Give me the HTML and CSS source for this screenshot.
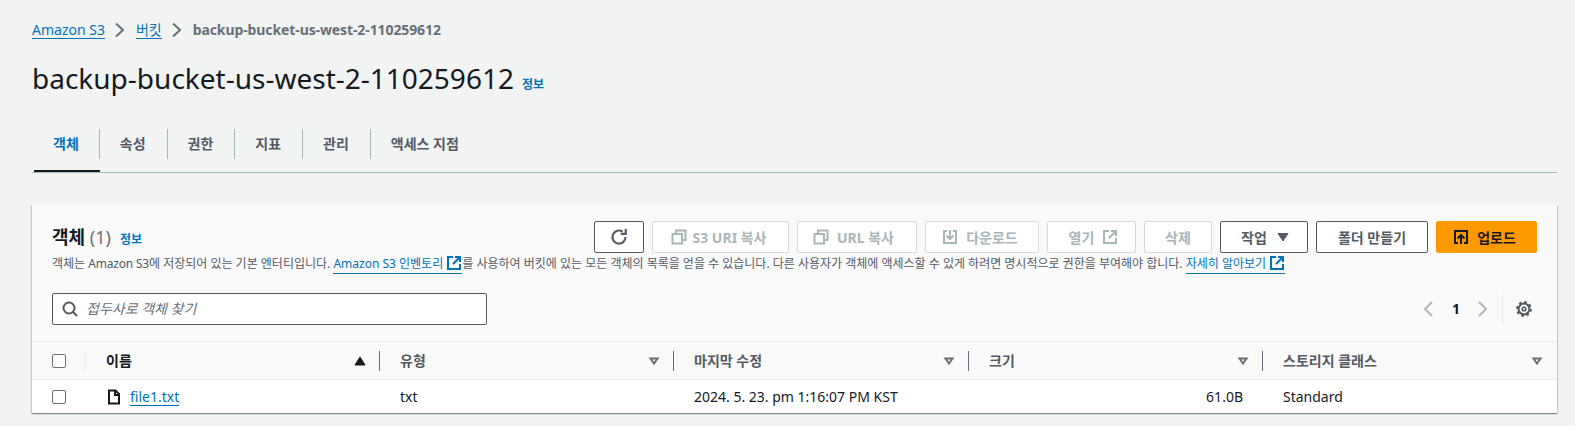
FILE: index.html
```html
<!DOCTYPE html>
<html lang="ko">
<head>
  <meta charset="UTF-8">
  <title>backup-bucket-us-west-2-110259612</title>
  <link rel="stylesheet" href="styles.css">
</head>
<body>
  <svg class="defs" width="0" height="0">
    <defs>
      <symbol id="i-ext" viewBox="0 0 16 16"><path d="M14 9v5H2V2h5M9 2h5v5M14 2 7 9" fill="none" stroke="currentColor" stroke-width="2"/></symbol>
      <symbol id="i-copy" viewBox="0 0 16 16"><path d="M5 5V1.500h9.500V11H11M1.500 5H11v9.500H1.500z" fill="none" stroke="currentColor" stroke-width="2"/></symbol>
      <symbol id="i-caret" viewBox="0 0 16 16"><path d="M3 4.500h10L8 12z" fill="currentColor" stroke="currentColor" stroke-width="1"/></symbol>
      <symbol id="i-sort" viewBox="0 0 16 16"><path d="M4.500 5.500h7L8 10.500z" fill="none" stroke="currentColor" stroke-width="2"/></symbol>
    </defs>
  </svg>

  <nav class="crumbs">
    <a href="#">Amazon S3</a>
    <svg class="crumb-sep" width="16" height="16" viewBox="0 0 16 16"><path d="M4 1.500l7 6.500-7 6.500" fill="none" stroke="currentColor" stroke-width="2"/></svg>
    <a href="#">버킷</a>
    <svg class="crumb-sep" width="16" height="16" viewBox="0 0 16 16"><path d="M4 1.500l7 6.500-7 6.500" fill="none" stroke="currentColor" stroke-width="2"/></svg>
    <span class="crumb-current">backup-bucket-us-west-2-110259612</span>
  </nav>

  <div class="page-title">
    <h1>backup-bucket-us-west-2-110259612</h1>
    <a class="info" href="#">정보</a>
  </div>

  <div class="tabs">
    <a class="tab active" href="#">객체</a>
    <a class="tab" href="#">속성</a>
    <a class="tab" href="#">권한</a>
    <a class="tab" href="#">지표</a>
    <a class="tab" href="#">관리</a>
    <a class="tab last" href="#">액세스 지점</a>
  </div>

  <section class="panel">
    <div class="panel-head">
      <div class="panel-top">
        <div class="panel-title">
          <h2>객체 <span class="count">(1)</span></h2>
          <a class="info" href="#">정보</a>
        </div>
        <div class="actions">
          <button class="btn refresh">
            <svg width="18" height="18" viewBox="0 0 16 16"><path d="M13.800 8A5.800 5.800 0 1 1 11.300 3.300" fill="none" stroke="currentColor" stroke-width="1.900"/><path d="M9.500 5.200h4.500V.8" fill="none" stroke="currentColor" stroke-width="1.900"/></svg>
          </button>
          <button class="btn off s3"><svg width="16" height="16"><use href="#i-copy"/></svg>S3 URI 복사</button>
          <button class="btn off url"><svg width="16" height="16"><use href="#i-copy"/></svg>URL 복사</button>
          <button class="btn off down">
            <svg width="16" height="16" viewBox="0 0 16 16"><path d="M5 2H2v12h12V2h-3M8 1v9M4.500 6.500 8 10l3.500-3.500" fill="none" stroke="currentColor" stroke-width="2"/></svg>
            다운로드
          </button>
          <button class="btn off open">열기<svg width="16" height="16"><use href="#i-ext"/></svg></button>
          <button class="btn off del">삭제</button>
          <button class="btn work">작업<svg width="16" height="16"><use href="#i-caret"/></svg></button>
          <button class="btn folder">폴더 만들기</button>
          <button class="btn primary">
            <svg width="16" height="16" viewBox="0 0 16 16"><path d="M5 14H2V2h12v12h-3M8 15V6M4.500 9.500 8 6l3.500 3.500" fill="none" stroke="currentColor" stroke-width="2"/></svg>
            업로드
          </button>
        </div>
      </div>
      <p class="desc">객체는 <span class="tight">Amazon S3</span>에 저장되어 있는 기본 엔터티입니다. <a href="#">Amazon S3 인벤토리 <svg class="ext-link" width="16" height="16"><use href="#i-ext"/></svg></a>를 사용하여 버킷에 있는 모든 객체의 목록을 얻을 수 있습니다. 다른 사용자가 객체에 액세스할 수 있게 하려면 명시적으로 권한을 부여해야 합니다. <a href="#">자세히 알아보기 <svg class="ext-link" width="16" height="16"><use href="#i-ext"/></svg></a></p>
    </div>

    <div class="tools">
      <label class="search">
        <svg width="16" height="16" viewBox="0 0 16 16"><circle cx="7" cy="7" r="5.500" fill="none" stroke="currentColor" stroke-width="2"/><path d="M11 11l4 4" stroke="currentColor" stroke-width="2"/></svg>
        <span>접두사로 객체 찾기</span>
      </label>
      <div class="pager">
        <svg class="pg-arrow" width="16" height="16" viewBox="0 0 16 16"><path d="M12 1 5 8l7 7" fill="none" stroke="currentColor" stroke-width="2"/></svg>
        <b>1</b>
        <svg class="pg-arrow" width="16" height="16" viewBox="0 0 16 16"><path d="M4 1l7 7-7 7" fill="none" stroke="currentColor" stroke-width="2"/></svg>
        <span class="pg-div"></span>
        <svg class="gear" width="16" height="16" viewBox="0 0 16 16"><circle cx="8" cy="8" r="5.400" fill="none" stroke="currentColor" stroke-width="2"/><circle cx="8" cy="8" r="6.800" fill="none" stroke="currentColor" stroke-width="2.200" stroke-dasharray="2.670 2.670"/><circle cx="8" cy="8" r="1.800" fill="none" stroke="currentColor" stroke-width="1.600"/></svg>
      </div>
    </div>

    <div class="grid head">
      <div class="cell check"><span class="box"></span></div>
      <div class="cell th sorted">이름<svg width="16" height="16" viewBox="0 0 16 16"><path d="M3 12h10L8 4z" fill="currentColor" stroke="currentColor"/></svg></div>
      <div class="cell th">유형<svg width="16" height="16"><use href="#i-sort"/></svg></div>
      <div class="cell th">마지막 수정<svg width="16" height="16"><use href="#i-sort"/></svg></div>
      <div class="cell th">크기<svg width="16" height="16"><use href="#i-sort"/></svg></div>
      <div class="cell th end">스토리지 클래스<svg width="16" height="16"><use href="#i-sort"/></svg></div>
    </div>
    <div class="grid row">
      <div class="cell check"><span class="box"></span></div>
      <div class="cell name">
        <svg width="16" height="16" viewBox="0 0 16 16"><path d="M9.500 1.500H3v13h10V5zM9 1.500V6h4.500" fill="none" stroke="currentColor" stroke-width="2"/></svg>
        <a href="#">file1.txt</a>
      </div>
      <div class="cell">txt</div>
      <div class="cell">2024. 5. 23. pm 1:16:07 PM KST</div>
      <div class="cell size">61.0B</div>
      <div class="cell">Standard</div>
    </div>
  </section>
</body>
</html>
```

FILE: styles.css
```css
* { box-sizing: border-box; }
html, body { margin: 0; }
body {
  background: #f2f3f3;
  color: #16191f;
  font-family: "Noto Sans", "Noto Sans CJK KR", sans-serif;
  font-size: 14px;
  line-height: 20px;
  padding: 20px 18px 0 32px;
  height: 426px;
  overflow: hidden;
}
a { color: #0073bb; text-decoration: none; }
svg { display: block; flex: none; }
.defs { position: absolute; }

/* breadcrumbs */
.crumbs { display: flex; align-items: center; height: 20px; }
.crumbs a { border-bottom: 1px solid #0073bb; line-height: 17px; }
.crumb-sep { color: #687078; margin: 0 8px 0 7px; }
.crumb-current { color: #687078; font-weight: 700; letter-spacing: -.1px; }

.page-title { display: flex; align-items: baseline; margin-top: 17px; height: 42px; }
.page-title h1 { margin: 0; font-size: 28px; line-height: 42px; font-weight: 400; }
.info { font-size: 12px; font-weight: 700; margin-left: 8px; }

/* tabs */
.tabs { display: flex; margin-top: 30px; height: 44px; border-bottom: 1px solid #aab7b8; }
.tab {
  position: relative;
  color: #545b64;
  font-weight: 700;
  height: 30px;
  line-height: 30px;
  padding: 0 21px 0 20px;
  border-right: 1px solid #aab7b8;
}
.tab.active { color: #0073bb; margin-left: 2px; padding: 0 20px 0 19px; }
.tab.active::after {
  content: "";
  position: absolute;
  left: 0;
  right: -1px;
  top: 41px;
  height: 2px;
  background: #16191f;
}
.tab.last { border-right: 0; }

/* panel */
.panel {
  margin-top: 32px;
  background: #fff;
  box-shadow: 0 1px 1px 0 rgba(0, 28, 36, .3), 1px 1px 1px 0 rgba(0, 28, 36, .15), -1px 1px 1px 0 rgba(0, 28, 36, .15);
}
.panel-head { background: #fafafa; padding: 16px 20px 0 20px; }
.panel-top { display: flex; justify-content: space-between; align-items: flex-start; }
.panel-title { display: flex; align-items: baseline; margin-top: 4px; }
.panel-title h2 { margin: 0; font-size: 18px; line-height: 24px; font-weight: 700; }
.panel-title .info { margin-left: 9px; }
.count { color: #687078; font-weight: 400; }

.actions { display: flex; gap: 8px; }
.btn {
  display: flex;
  align-items: center;
  justify-content: center;
  gap: 8px;
  height: 32px;
  background: #fff;
  border: 1px solid #545b64;
  border-radius: 2px;
  color: #545b64;
  font: 700 14px "Noto Sans", "Noto Sans CJK KR", sans-serif;
  padding: 0;
}
.btn.off { border-color: #d5dbdb; color: #aab7b8; }
.refresh { width: 50px; }
.s3 { width: 137px; gap: 6px; padding-right: 4px; }
.url { width: 120px; padding-right: 7px; }
.down { width: 114px; padding-right: 4px; }
.open { width: 89px; padding-left: 4px; }
.del { width: 68px; }
.work { width: 88px; padding-left: 4px; }
.folder { width: 112px; }
.primary { width: 101px; padding-right: 4px; background: #f90; border-color: #f90; color: #16191f; }

.desc { margin: 1px 0 0; font-size: 12px; line-height: 20px; color: #545b64; white-space: nowrap; }
.desc a { border-bottom: 1px solid #0073bb; padding-bottom: 1px; }
.tight { letter-spacing: -.2px; }
.ext-link { display: inline-block; vertical-align: -3px; }

/* search + pager */
.tools {
  display: flex;
  justify-content: space-between;
  align-items: center;
  background: #fafafa;
  padding: 19px 25px 16px 20px;
}
.search {
  display: flex;
  align-items: center;
  gap: 8px;
  width: 435px;
  height: 32px;
  padding-left: 9px;
  background: #fff;
  border: 1px solid #545b64;
  border-radius: 2px;
  color: #545b64;
}
.search span { font-style: italic; color: #687078; }
.pager { display: flex; align-items: center; height: 32px; }
.pager b { width: 12px; text-align: center; margin: 0 13px 0 14px; }
.pg-arrow { color: #aab7b8; }
.pg-div { width: 1px; height: 32px; background: #eaeded; margin: 0 13px 0 11px; }
.gear { color: #545b64; }

/* table */
.grid { display: grid; grid-template-columns: 54px 294px 294px 295px 294px 294px; }
.cell { display: flex; align-items: center; padding-left: 20px; }
.box { width: 14px; height: 14px; background: #fff; border: 1px solid #687078; border-radius: 2px; }
.head {
  height: 39px;
  background: #fafafa;
  border-top: 1px solid #eaeded;
  border-bottom: 1px solid #eaeded;
}
.th {
  justify-content: space-between;
  height: 20px;
  align-self: center;
  padding-right: 11px;
  border-right: 1px solid #687078;
  color: #545b64;
  font-weight: 700;
}
.head .check { height: 20px; align-self: center; border-right: 1px solid #eaeded; }
.th svg { color: #687078; }
.th.sorted { color: #16191f; }
.th.sorted svg { color: #16191f; }
.th.end { border-right: 0; padding-right: 12px; }
.row { height: 33px; }
.name { gap: 8px; }
.name a { border-bottom: 1px solid #0073bb; line-height: 17px; }
.size { justify-content: flex-end; padding-right: 20px; }
```
